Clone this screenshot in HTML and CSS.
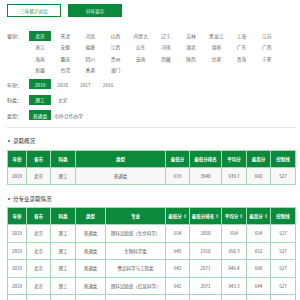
FILE: index.html
```html
<!DOCTYPE html>
<html lang="zh">
<head>
<meta charset="utf-8">
<link rel="stylesheet" href="styles.css">
</head>
<body>
<div class="tabs">
  <div class="tab tab-outline">三年统计对比</div>
  <div class="tab tab-fill">分年显示</div>
</div>

<div class="filters">
  <div class="frow">
    <div class="flabel">省份：</div>
    <div class="pgrid">
      <span class="opt on">北京</span><span class="opt">天津</span><span class="opt">河北</span><span class="opt">山西</span><span class="opt">内蒙古</span><span class="opt">辽宁</span><span class="opt">吉林</span><span class="opt">黑龙江</span><span class="opt">上海</span><span class="opt">江苏</span>
      <span class="opt">浙江</span><span class="opt">安徽</span><span class="opt">福建</span><span class="opt">江西</span><span class="opt">山东</span><span class="opt">河南</span><span class="opt">湖北</span><span class="opt">湖南</span><span class="opt">广东</span><span class="opt">广西</span>
      <span class="opt">海南</span><span class="opt">重庆</span><span class="opt">四川</span><span class="opt">贵州</span><span class="opt">云南</span><span class="opt">西藏</span><span class="opt">陕西</span><span class="opt">甘肃</span><span class="opt">青海</span><span class="opt">宁夏</span>
      <span class="opt">新疆</span><span class="opt">台湾</span><span class="opt">香港</span><span class="opt">澳门</span>
    </div>
  </div>
  <div class="frow single first">
    <div class="flabel">年份：</div>
    <div class="olist">
      <span class="opt on">2019</span><span class="opt">2018</span><span class="opt">2017</span><span class="opt">2016</span>
    </div>
  </div>
  <div class="frow single">
    <div class="flabel">科类：</div>
    <div class="olist">
      <span class="opt on">理工</span><span class="opt">文史</span>
    </div>
  </div>
  <div class="frow single">
    <div class="flabel">类型：</div>
    <div class="olist">
      <span class="opt on">普通类</span><span class="opt wide">中外合作办学</span>
    </div>
  </div>
</div>

<div class="divider"></div>

<div class="stitle"><span class="dot"></span>录取概况</div>
<table class="tbl t1">
  <colgroup>
    <col style="width:19px"><col style="width:24px"><col style="width:25px"><col style="width:90px"><col style="width:24px"><col style="width:32px"><col style="width:25px"><col style="width:24px"><col style="width:25px">
  </colgroup>
  <thead>
    <tr><th>年份</th><th>省市</th><th>科类</th><th>类型</th><th>最低分</th><th>最低分排名</th><th>平均分</th><th>最高分</th><th>控制线</th></tr>
  </thead>
  <tbody>
    <tr><td>2019</td><td>北京</td><td>理工</td><td>普通类</td><td>633</td><td>3948</td><td>639.7</td><td>660</td><td>527</td></tr>
  </tbody>
</table>

<div class="stitle s2"><span class="dot"></span>分专业录取情况</div>
<table class="tbl t2">
  <colgroup>
    <col style="width:19px"><col style="width:24px"><col style="width:25px"><col style="width:30px"><col style="width:60px"><col style="width:24px"><col style="width:32px"><col style="width:25px"><col style="width:24px"><col style="width:25px">
  </colgroup>
  <thead>
    <tr><th>年份</th><th>省市</th><th>科类</th><th>类型</th><th>专业</th><th>最低分<span class="sort">⇕</span></th><th>最低分排名<span class="sort">⇕</span></th><th>平均分<span class="sort">⇕</span></th><th>最高分<span class="sort">⇕</span></th><th>控制线</th></tr>
  </thead>
  <tbody>
    <tr><td>2019</td><td>北京</td><td>理工</td><td>普通类</td><td>理科试验班（生命科学）</td><td>654</td><td>1858</td><td>654</td><td>654</td><td>527</td></tr>
    <tr><td>2019</td><td>北京</td><td>理工</td><td>普通类</td><td>生物科学类</td><td>649</td><td>2310</td><td>650.3</td><td>652</td><td>527</td></tr>
    <tr><td>2019</td><td>北京</td><td>理工</td><td>普通类</td><td>食品科学与工程类</td><td>642</td><td>2971</td><td>646.4</td><td>660</td><td>527</td></tr>
    <tr><td>2019</td><td>北京</td><td>理工</td><td>普通类</td><td>理科试验班（信息科学）</td><td>642</td><td>2971</td><td>643.3</td><td>644</td><td>527</td></tr>
    <tr><td>2019</td><td>北京</td><td>理工</td><td>普通类</td><td>材料类</td><td>641</td><td>3082</td><td>642.2</td><td>645</td><td>527</td></tr>
  </tbody>
</table>
</body>
</html>
```
FILE: styles.css
```css
html, body {
  margin: 0;
  padding: 0;
  background: #fff;
}
body {
  width: 300px;
  font-family: "Noto Sans CJK SC", "Noto Sans", sans-serif;
  color: #555;
}
.tabs {
  display: flex;
  gap: 7px;
  padding: 4px 0 0 7px;
}
.tab {
  width: 54px;
  height: 13px;
  box-sizing: border-box;
  display: flex;
  align-items: center;
  justify-content: center;
  font-size: 4.6px;
}
.tab-outline {
  border: 1px solid #0b8a3c;
  color: #0b8a3c;
}
.tab-fill {
  background: #0b8a3c;
  color: #fff;
}
.filters {
  margin-top: 13px;
  padding-left: 7px;
}
.frow {
  display: flex;
  align-items: flex-start;
}
.flabel {
  width: 22px;
  font-size: 5px;
  color: #555;
  height: 11.3px;
  line-height: 11.3px;
}
.pgrid {
  display: grid;
  grid-template-columns: repeat(10, 25.2px);
  grid-auto-rows: 11.3px;
  align-items: center;
}
.opt {
  display: flex;
  align-items: center;
  justify-content: center;
  width: 22px;
  height: 10px;
  font-size: 4.8px;
  color: #666;
}
.opt.on {
  background: #0b8a3c;
  color: #fff;
}
.frow.single {
  height: 15.5px;
  align-items: center;
}
.frow.single .flabel {
  height: auto;
  line-height: 1;
}
.frow.first {
  margin-top: 1.5px;
}
.olist {
  display: flex;
  gap: 0.7px;
}
.opt.wide {
  width: 34px;
}
.divider {
  margin: 4px 5px 0 7px;
  height: 1px;
  background: #e6e6e6;
}
.stitle {
  display: flex;
  align-items: center;
  gap: 3px;
  margin: 9px 0 0 8px;
  height: 8px;
  font-size: 5.5px;
  color: #333;
}
.stitle.s2 {
  margin-top: 10px;
}
.dot {
  width: 2px;
  height: 2px;
  background: #0b8a3c;
  border-radius: 50%;
}
.tbl {
  margin: 5px 0 0 7px;
  width: 288px;
  table-layout: fixed;
  border-collapse: collapse;
}
.t2 {
  margin-top: 4px;
}
.tbl th, .tbl td {
  border: 1px solid #a6d7b6;
  text-align: center;
  padding: 0;
  overflow: hidden;
  white-space: nowrap;
  font-size: 4.5px;
}
.tbl th {
  background: #0b8a3c;
  color: #fff;
  font-weight: bold;
  height: 16px;
}
.tbl td {
  color: #555;
  height: 16.5px;
}
.t1 td {
  background: #f7f7f7;
  height: 16px;
}
.sort {
  margin-left: 1px;
  font-weight: normal;
}
```
